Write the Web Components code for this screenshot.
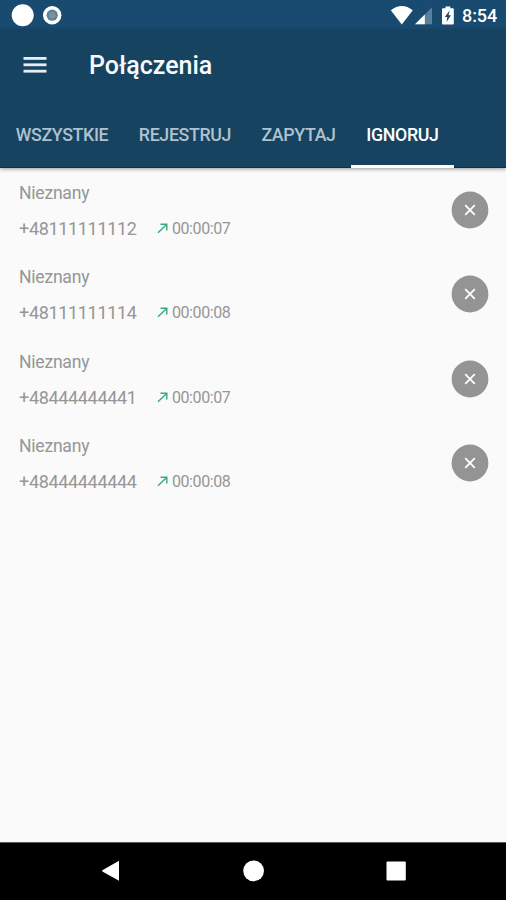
<!DOCTYPE html>
<html lang="pl">
<head>
<meta charset="UTF-8">
<title>Połączenia</title>
<style>
    body {
        margin: 0;
        font-family: Roboto, "Liberation Sans", sans-serif;
        background-color: #fafafa;
    }
</style>
</head>
<body>
<phone-screen>
    <status-bar slot="top" time="8:54"></status-bar>
    <app-header slot="top" title-text="Połączenia">
        <app-tab style="width: 124px">WSZYSTKIE</app-tab>
        <app-tab style="width: 122px">REJESTRUJ</app-tab>
        <app-tab style="width: 105px">ZAPYTAJ</app-tab>
        <app-tab style="width: 103px" active>IGNORUJ</app-tab>
    </app-header>
    <call-item name="Nieznany" number="+48111111112" time="00:00:07"></call-item>
    <call-item name="Nieznany" number="+48111111114" time="00:00:08"></call-item>
    <call-item name="Nieznany" number="+48444444441" time="00:00:07"></call-item>
    <call-item name="Nieznany" number="+48444444444" time="00:00:08"></call-item>
    <nav-bar slot="bottom"></nav-bar>
</phone-screen>

<script>
class PhoneScreen extends HTMLElement {
    constructor() {
        super();
        this.attachShadow({ mode: "open" });
        this.shadowRoot.innerHTML = `
            <style>
                :host {
                    display: flex;
                    flex-direction: column;
                    width: 506px;
                    height: 900px;
                    overflow: hidden;
                    background-color: #fafafa;
                }
                main {
                    flex: 1;
                }
            </style>
            <slot name="top"></slot>
            <main><slot></slot></main>
            <slot name="bottom"></slot>
        `;
    }
}
customElements.define("phone-screen", PhoneScreen);

class StatusBar extends HTMLElement {
    constructor() {
        super();
        this.attachShadow({ mode: "open" });
        this.shadowRoot.innerHTML = `
            <style>
                :host {
                    display: flex;
                    justify-content: space-between;
                    height: 30px;
                    background-color: #194b71;
                    color: #fff;
                }
                svg {
                    display: block;
                }
                .right {
                    display: flex;
                    padding-right: 9px;
                }
                .time {
                    width: 35px;
                    font-size: 18px;
                    font-weight: 500;
                    line-height: 32px;
                    letter-spacing: -0.1px;
                    white-space: nowrap;
                }
            </style>
            <svg width="70" height="30">
                <circle cx="22.7" cy="15.2" r="11" fill="#fff"/>
                <circle cx="52.2" cy="15.2" r="9.2" fill="#fff"/>
                <circle cx="52.2" cy="15.2" r="5.6" fill="#5e8198"/>
                <circle cx="52.2" cy="15.2" r="3.4" fill="#77939f"/>
            </svg>
            <div class="right">
                <svg width="72" height="30">
                    <path d="M0.8 10.3Q11.8 1.8 22.8 10.3L11.8 24.4Z" fill="#fff"/>
                    <path d="M42 7.3V24.3H25Z" fill="#58809d"/>
                    <path d="M34.8 14.5V24.3H25Z" fill="#fff"/>
                    <path d="M55.5 6.5V8.3H53Q52 8.3 52 9.3V23.5Q52 24.5 53 24.5H62.8Q63.8 24.5 63.8 23.5V9.3Q63.8 8.3 62.8 8.3H60.3V6.5Z" fill="#fff"/>
                    <path d="M59.6 10.5L54.8 17H57.3L56.5 22L61 15.3H58.6Z" fill="#194b71"/>
                </svg>
                <div class="time">${this.getAttribute("time")}</div>
            </div>
        `;
    }
}
customElements.define("status-bar", StatusBar);

class AppHeader extends HTMLElement {
    constructor() {
        super();
        this.attachShadow({ mode: "open" });
        this.shadowRoot.innerHTML = `
            <style>
                :host {
                    display: block;
                    height: 138px;
                    box-sizing: border-box;
                    background-color: #154360;
                    border-bottom: 1px solid #0b2d55;
                    box-shadow: 0 1px 4px rgba(0, 0, 0, 0.4);
                }
                .toolbar {
                    display: flex;
                    align-items: center;
                    height: 70px;
                    padding-left: 23px;
                    box-sizing: border-box;
                }
                h1 {
                    margin: 2px 0 0 42px;
                    font-size: 25px;
                    font-weight: 500;
                    line-height: 30px;
                    color: #f8fafc;
                }
                .tabs {
                    display: flex;
                    height: 67px;
                }
            </style>
            <div class="toolbar">
                <svg width="24" height="18" fill="#e9ecf7">
                    <rect x="0.5" y="1" width="23" height="2.8"/>
                    <rect x="0.5" y="7.4" width="23" height="2.8"/>
                    <rect x="0.5" y="13.8" width="23" height="2.8"/>
                </svg>
                <h1>${this.getAttribute("title-text")}</h1>
            </div>
            <div class="tabs"><slot></slot></div>
        `;
    }
}
customElements.define("app-header", AppHeader);

class AppTab extends HTMLElement {
    constructor() {
        super();
        this.attachShadow({ mode: "open" });
        this.shadowRoot.innerHTML = `
            <style>
                :host {
                    display: block;
                    flex: none;
                    height: 68px;
                    box-sizing: border-box;
                    text-align: center;
                    font-size: 17.8px;
                    font-weight: 500;
                    line-height: 70px;
                    letter-spacing: -0.35px;
                    color: #b0c1cf;
                }
                :host([active]) {
                    color: #fff;
                    border-bottom: 3px solid #fff;
                }
            </style>
            <slot></slot>
        `;
    }
}
customElements.define("app-tab", AppTab);

class CallItem extends HTMLElement {
    constructor() {
        super();
        this.attachShadow({ mode: "open" });
        this.shadowRoot.innerHTML = `
            <style>
                :host {
                    display: flex;
                    justify-content: space-between;
                    height: 84.35px;
                    box-sizing: border-box;
                    padding: 13px 17px 0 19px;
                    color: #969696;
                }
                .name {
                    font-size: 17.6px;
                    line-height: 24px;
                    letter-spacing: -0.25px;
                }
                .details {
                    display: flex;
                    align-items: center;
                    margin-top: 12px;
                    line-height: 24px;
                }
                .number {
                    width: 138px;
                    font-size: 18px;
                    letter-spacing: -0.33px;
                }
                .arrow {
                    margin-right: 3px;
                }
                .time {
                    font-size: 16px;
                    letter-spacing: -0.43px;
                }
                .remove {
                    margin-top: 10px;
                }
            </style>
            <div>
                <div class="name">${this.getAttribute("name")}</div>
                <div class="details">
                    <span class="number">${this.getAttribute("number")}</span>
                    <svg class="arrow" width="12" height="12" fill="none" stroke="#35aa82" stroke-width="1.4">
                        <path d="M1 9.8L9.6 1.5M3.5 1.3H9.8V7.4"/>
                    </svg>
                    <span class="time">${this.getAttribute("time")}</span>
                </div>
            </div>
            <svg class="remove" width="38" height="38">
                <circle cx="19" cy="19" r="18.4" fill="#949494"/>
                <path d="M14.2 14.2L23.8 23.8M23.8 14.2L14.2 23.8" stroke="#fff" stroke-width="1.8"/>
            </svg>
        `;
    }
}
customElements.define("call-item", CallItem);

class NavBar extends HTMLElement {
    constructor() {
        super();
        this.attachShadow({ mode: "open" });
        this.shadowRoot.innerHTML = `
            <style>
                :host {
                    display: block;
                    height: 58px;
                    background-color: #000;
                }
                svg {
                    display: block;
                }
            </style>
            <svg width="506" height="58" fill="#fff">
                <rect width="506" height="0.6" fill="#999"/>
                <path d="M102.8 28L119 18.8V38.8L102.8 29.8Q101.2 28.9 102.8 28Z"/>
                <circle cx="253.6" cy="28.8" r="10.4"/>
                <rect x="386.5" y="19.5" width="19.3" height="19" rx="1"/>
            </svg>
        `;
    }
}
customElements.define("nav-bar", NavBar);
</script>
</body>
</html>
